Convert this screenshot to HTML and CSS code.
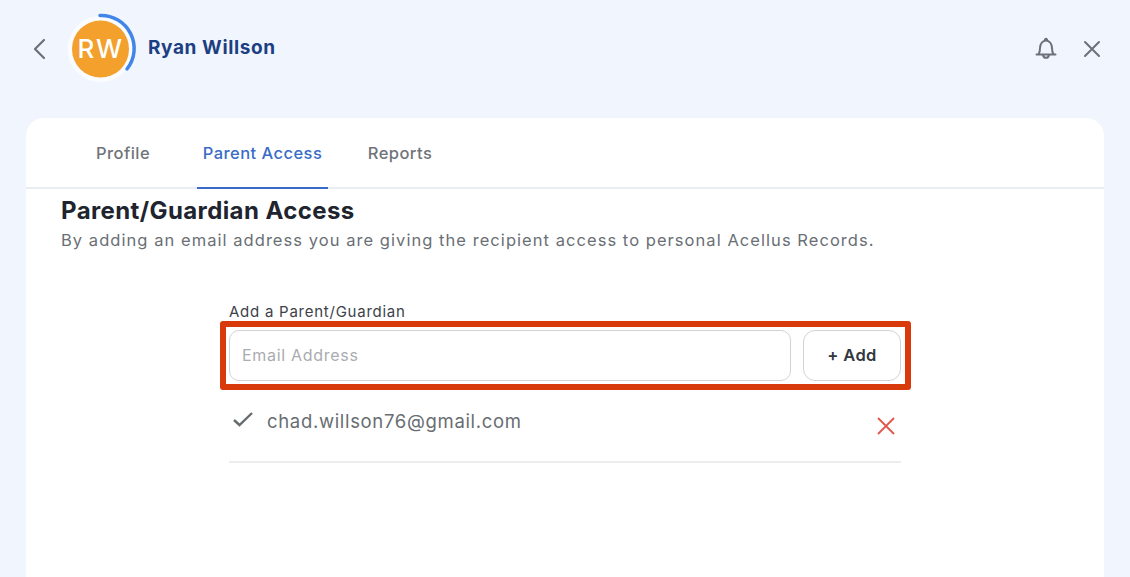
FILE: index.html
```html
<!DOCTYPE html>
<html lang="en">
<head>
<meta charset="utf-8">
<title>Parent Access</title>
<link rel="stylesheet" href="styles.css">
</head>
<body>
<header class="topbar">
  <svg class="back" width="14" height="22" viewBox="0 0 14 22"><path d="M12 2 3 11l9 9" fill="none" stroke="#6c7178" stroke-width="2.2" stroke-linecap="round" stroke-linejoin="round"/></svg>
  <div class="avatar">
    <svg class="ring" width="72" height="72" viewBox="0 0 72 72"><circle cx="33.5" cy="36" r="33" fill="#fafcff"/><circle cx="33.500" cy="36" r="28.500" fill="#f3a02c"/><path d="M33 2.500A33 33 0 0 1 60 56" fill="none" stroke="#4285e8" stroke-width="3.500" stroke-linecap="round"/></svg>
    <span class="initials">RW</span>
  </div>
  <div class="name">Ryan Willson</div>
  <div class="actions">
    <svg class="bell" width="24" height="24" viewBox="0 0 24 24" fill="none" stroke="#6c7178" stroke-width="2" stroke-linecap="round" stroke-linejoin="round"><path d="M2.500 18.500h19M4.500 18.500c1-1.500 1.500-3 1.500-6.500 0-4 2.500-7.500 6-7.500s6 3.500 6 7.500c0 3.500.5 5 1.500 6.500M10.800 4.700c-.2-2.600 2.600-2.600 2.400 0M9 19c.6 3.800 5.400 3.800 6 0"/></svg>
    <svg width="18" height="18" viewBox="0 0 18 18" fill="none" stroke="#6c7178" stroke-width="2" stroke-linecap="round"><path d="m2 2 14 14M16 2 2 16"/></svg>
  </div>
</header>
<main class="card">
  <nav class="tabs">
    <a class="tab">Profile</a>
    <a class="tab active">Parent Access</a>
    <a class="tab">Reports</a>
  </nav>
  <section class="content">
    <h1 class="title">Parent/Guardian Access</h1>
    <p class="lead">By adding an email address you are giving the recipient access to personal Acellus Records.</p>
    <div class="form">
      <label class="label">Add a Parent/Guardian</label>
      <div class="row">
        <div class="highlight"></div>
        <input class="email" type="text" placeholder="Email Address">
        <button class="add">+ Add</button>
      </div>
      <div class="entry">
        <svg class="check" width="22" height="16" viewBox="0 0 22 16"><path d="m2 9 5.500 5L20 2" fill="none" stroke="#666b70" stroke-width="2.400"/></svg>
        <span class="address">chad.willson76@gmail.com</span>
        <svg class="remove" width="20" height="20" viewBox="0 0 20 20"><path d="m2 2 16 16M18 2 2 18" fill="none" stroke="#e2564a" stroke-width="1.800"/></svg>
      </div>
    </div>
  </section>
</main>
</body>
</html>
```
FILE: styles.css
```css
* { box-sizing: border-box; }
html, body { height: 100%; }
body {
  margin: 0;
  height: 577px;
  overflow: hidden;
  background: #f1f5fd;
  font-family: Inter, "Liberation Sans", sans-serif;
  color: #1f2430;
}
.topbar {
  height: 118px;
  padding: 2px 29px 23px 32px;
  display: flex;
  align-items: center;
}
.back { margin-right: 21px; }
.avatar { position: relative; width: 72px; height: 72px; margin-right: 9px; }
.ring { display: block; }
.initials {
  position: absolute;
  left: 0;
  top: 0;
  width: 67px;
  height: 72px;
  display: flex;
  align-items: center;
  justify-content: center;
  color: #fff;
  font-size: 26px;
  font-weight: 500;
  letter-spacing: 1.5px;
}
.name { font-size: 19px; font-weight: 700; color: #1c3f83; letter-spacing: .6px; padding-bottom: 2px; }
.actions { margin-left: auto; display: flex; align-items: center; gap: 25px; }
.bell { margin-bottom: 2px; }
.card {
  margin: 0 26px;
  height: 480px;
  background: #fff;
  border-radius: 18px 18px 0 0;
}
.tabs {
  height: 71px;
  padding-left: 60px;
  display: flex;
  border-bottom: 2px solid #e9ecf2;
  gap: 37px;
}
.tab {
  height: 71px;
  display: flex;
  align-items: center;
  justify-content: center;
  font-size: 16.500px;
  font-weight: 500;
  color: #6f7479;
  letter-spacing: .45px;
  padding-bottom: 1px;
}
.tab:nth-child(1) { width: 74px; }
.tab:nth-child(2) { width: 131px; color: #3a6cc7; border-bottom: 2px solid #3a6cc7; padding: 1px 0 0; }
.tab:nth-child(3) { width: 80px; margin-left: -5px; }
.content { padding: 8px 35px 0; }
.title { margin: 0; font-size: 24px; line-height: 28px; font-weight: 700; color: #20242e; letter-spacing: .4px; }
.lead { margin: 3px 0 0; font-size: 16.500px; line-height: 24px; color: #6a6f75; letter-spacing: 1.05px; white-space: nowrap; }
.form { width: 672px; margin: 50px 0 0 168px; }
.label { display: block; font-size: 15px; line-height: 20px; color: #3d4249; letter-spacing: .75px; }
.row { position: relative; display: flex; gap: 12px; margin-top: 8px; height: 51px; }
.highlight {
  position: absolute;
  left: -9px;
  right: -10px;
  top: -9px;
  bottom: -9px;
  border: 6px solid #d93a0b;
  border-radius: 3px;
}
.email {
  flex: 1;
  border: 1px solid #d3d3d6;
  border-radius: 10px;
  padding: 0 12px 2px;
  font: 400 16px Inter, "Liberation Sans", sans-serif;
  letter-spacing: .7px;
  background: #fff;
  outline: none;
}
.email::placeholder { color: #a9acb0; opacity: 1; }
.add {
  width: 98px;
  border: 1px solid #d3d3d6;
  border-radius: 12px;
  background: #fff;
  color: #33383f;
  font: 600 16.500px Inter, "Liberation Sans", sans-serif;
  letter-spacing: .4px;
  padding: 0 0 2px;
}
.entry {
  height: 82px;
  display: flex;
  align-items: flex-start;
  border-bottom: 2px solid #ebedef;
  padding-top: 29px;
}
.check { margin: 1px 13px 0 3px; }
.address { font-size: 18.500px; line-height: 22px; color: #686d72; letter-spacing: .67px; }
.remove { margin: 6px 5px 0 auto; }
```
